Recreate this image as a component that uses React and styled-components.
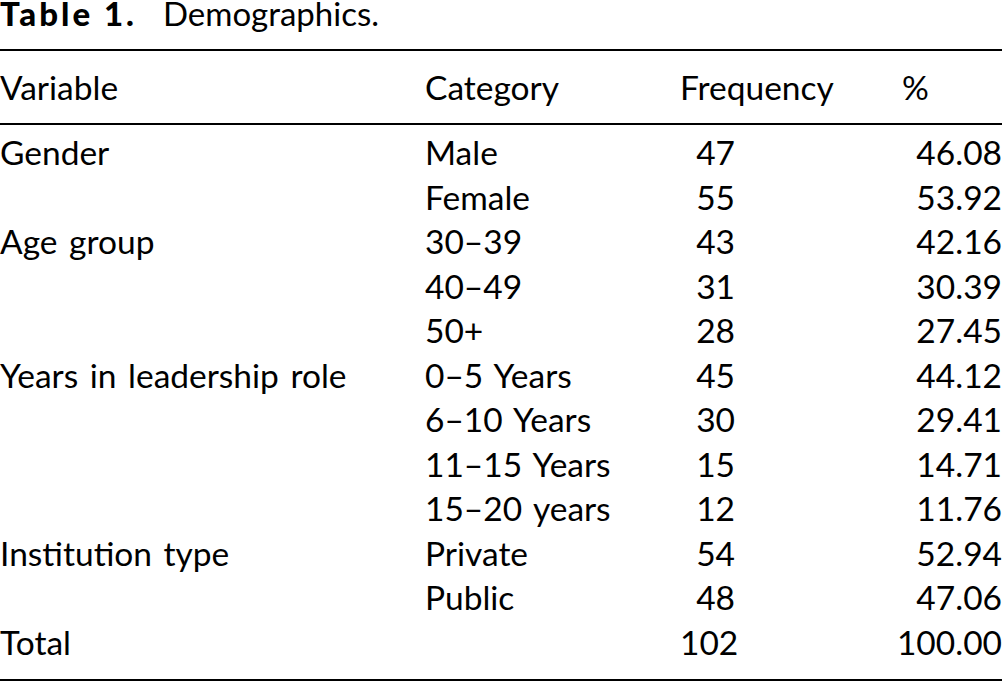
import React from 'react'
import styled, { createGlobalStyle } from 'styled-components'

const Global = createGlobalStyle`
  html, body {
    margin: 0;
    padding: 0;
    background: #fff;
  }
  body {
    font-family: Lato, "Open Sans", sans-serif;
    color: #000;
  }
`

const rows = [
  ['Gender', 'Male', '47', '46.08'],
  ['', 'Female', '55', '53.92'],
  ['Age group', '30–39', '43', '42.16'],
  ['', '40–49', '31', '30.39'],
  ['', '50+', '28', '27.45'],
  ['Years in leadership role', '0–5 Years', '45', '44.12'],
  ['', '6–10 Years', '30', '29.41'],
  ['', '11–15 Years', '15', '14.71'],
  ['', '15–20 years', '12', '11.76'],
  ['Institution type', 'Private', '54', '52.94'],
  ['', 'Public', '48', '47.06'],
  ['Total', '', '102', '100.00'],
]

/* ------------------------------ Caption ---------------------------------- */
const Caption = styled.div`
  display: flex;
  align-items: baseline;
  width: 1002px;
  height: 26px;
  font-size: 33px;
  line-height: 26px;
  margin-bottom: 23px;
  white-space: nowrap;
`

const Label = styled.span`
  font-weight: 900;
  letter-spacing: 3px;
  width: 163px;
`

/* ------------------------------- Table ----------------------------------- */
const Table = styled.div`
  width: 1002px;
  font-size: 33.5px;
  line-height: 44.5px;
  border-top: 2px solid #000;
  border-bottom: 2px solid #000;
`

const Section = styled.div`
  display: grid;
  grid-template-columns: 425px 255px 55px 267px;
  padding: ${p => p.$pad};
  border-bottom: ${p => (p.$rule ? '2px solid #000' : 'none')};
`

const Cell = styled.div`
  white-space: nowrap;
  text-align: ${p => p.$align || 'left'};
  padding-left: ${p => p.$indent || 0}px;
  word-spacing: ${p => (p.$wide ? '3px' : 'normal')};
`

export default function App() {
  return (
    <>
      <Global />
      <Caption>
        <Label>Table 1.</Label>
        <span>Demographics.</span>
      </Caption>
      <Table>
        <Section $pad="14px 0 13.5px" $rule>
          <Cell>Variable</Cell>
          <Cell>Category</Cell>
          <Cell>Frequency</Cell>
          <Cell $indent={167}>%</Cell>
        </Section>
        <Section $pad="5px 0 14.5px">
          {rows.map((r, i) => (
            <React.Fragment key={i}>
              <Cell $wide>{r[0]}</Cell>
              <Cell $wide>{r[1]}</Cell>
              <Cell $align="right">{r[2]}</Cell>
              <Cell $align="right">{r[3]}</Cell>
            </React.Fragment>
          ))}
        </Section>
      </Table>
    </>
  )
}
